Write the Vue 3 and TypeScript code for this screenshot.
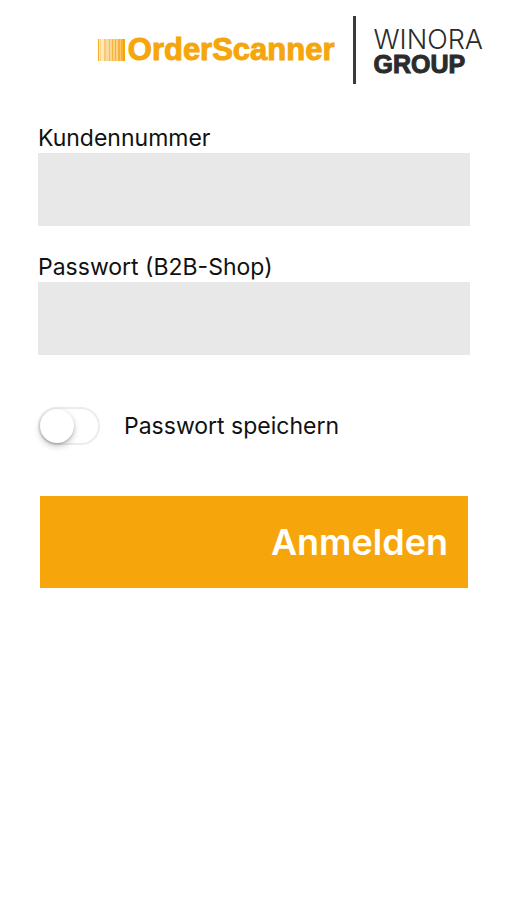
<script setup lang="ts">
import { ref } from 'vue'

interface Bar {
  x: number
  width: number
  opacity: number
}

const customerNumber = ref<string>('')
const password = ref<string>('')
const savePassword = ref<boolean>(false)

const bars: Bar[] = [
  { x: 0, width: 1, opacity: 0.9 },
  { x: 1, width: 5, opacity: 0.25 },
  { x: 2, width: 1, opacity: 0.3 },
  { x: 6, width: 2, opacity: 0.6 },
  { x: 8, width: 3, opacity: 0.4 },
  { x: 11, width: 1, opacity: 0.75 },
  { x: 12, width: 2, opacity: 0.45 },
  { x: 14, width: 1, opacity: 0.8 },
  { x: 15, width: 2, opacity: 0.5 },
  { x: 17, width: 1, opacity: 0.85 },
  { x: 18, width: 2, opacity: 0.5 },
  { x: 20, width: 2, opacity: 0.85 },
  { x: 22, width: 1, opacity: 0.6 },
  { x: 23, width: 2, opacity: 0.85 },
  { x: 25, width: 2, opacity: 1 },
]
</script>

<template>
  <main class="page">
    <header class="header">
      <div class="product">
        <svg class="barcode" viewBox="0 0 27 22" aria-hidden="true">
          <rect
            v-for="(bar, index) in bars"
            :key="index"
            :x="bar.x"
            y="0"
            :width="bar.width"
            height="22"
            :opacity="bar.opacity"
            fill="#f6a50b"
          />
        </svg>
        <span class="product-name">OrderScanner</span>
      </div>
      <div class="company">
        <span class="company-light">WINORA</span>
        <span class="company-bold">GROUP</span>
      </div>
    </header>

    <form class="form" @submit.prevent>
      <div class="field">
        <label class="label" for="customer-number">Kundennummer</label>
        <input id="customer-number" v-model="customerNumber" class="input" type="text" />
      </div>
      <div class="field">
        <label class="label" for="password">Passwort (B2B-Shop)</label>
        <input id="password" v-model="password" class="input" type="password" />
      </div>
      <div class="save">
        <input id="save-password" v-model="savePassword" class="switch" type="checkbox" />
        <label class="label" for="save-password">Passwort speichern</label>
      </div>
      <button class="submit" type="submit">Anmelden</button>
    </form>
  </main>
</template>

<style>
body {
  background: #fff;
}
</style>

<style scoped>
.page {
  padding: 16px 24px 32px;
  font-family: Inter, "Liberation Sans", sans-serif;
  color: #111;
}

.header {
  display: flex;
  justify-content: flex-end;
  align-items: center;
  gap: 18px;
}

.product {
  display: flex;
  align-items: center;
  gap: 3px;
  color: #f6a50b;
}

.barcode {
  width: 27px;
  height: 22px;
}

.product-name {
  font-family: "Liberation Sans", Arial, sans-serif;
  font-size: 31px;
  font-weight: 700;
  line-height: 36px;
  -webkit-text-stroke: 1px #f6a50b;
}

.company {
  display: flex;
  flex-direction: column;
  justify-content: center;
  box-sizing: border-box;
  height: 68px;
  padding: 4px 0 0 18px;
  border-left: 3px solid #3a3a3a;
  color: #2b2b2b;
}

.company-light {
  font-size: 27px;
  font-weight: 300;
  line-height: 25px;
}

.company-bold {
  font-family: "Liberation Sans", Arial, sans-serif;
  font-size: 25px;
  font-weight: 700;
  line-height: 25px;
  -webkit-text-stroke: 1px #2b2b2b;
}

.form {
  display: flex;
  flex-direction: column;
  padding: 38px 13px 0 14px;
}

.field {
  display: flex;
  flex-direction: column;
  margin-bottom: 25px;
}

.label {
  font-size: 23px;
  line-height: 31px;
}

.input {
  box-sizing: border-box;
  width: 100%;
  height: 73px;
  padding: 0 16px;
  border: 0;
  border-radius: 0;
  background: #e8e8e8;
  font: inherit;
  font-size: 23px;
}

.field .label {
  padding-top: 2px;
  line-height: 29px;
}

.save {
  display: flex;
  align-items: center;
  gap: 24px;
  margin-top: 27px;
}

.switch {
  appearance: none;
  display: flex;
  box-sizing: border-box;
  width: 62px;
  height: 38px;
  margin: 0;
  padding: 0;
  border: 2px solid #ececec;
  border-radius: 19px;
  background: #fff;
}

.switch::before {
  content: "";
  width: 34px;
  height: 34px;
  border-radius: 50%;
  background: #fff;
  box-shadow: 0 3px 6px rgba(0, 0, 0, 0.25), 0 1px 2px rgba(0, 0, 0, 0.15);
}

.switch:checked {
  justify-content: flex-end;
  background: #f6a50b;
}

.submit {
  height: 92px;
  margin: 51px 2px 0;
  padding: 0 20px;
  border: 0;
  background: #f6a50b;
  color: #fff;
  font-family: inherit;
  font-size: 36px;
  font-weight: 600;
  text-align: right;
}
</style>
